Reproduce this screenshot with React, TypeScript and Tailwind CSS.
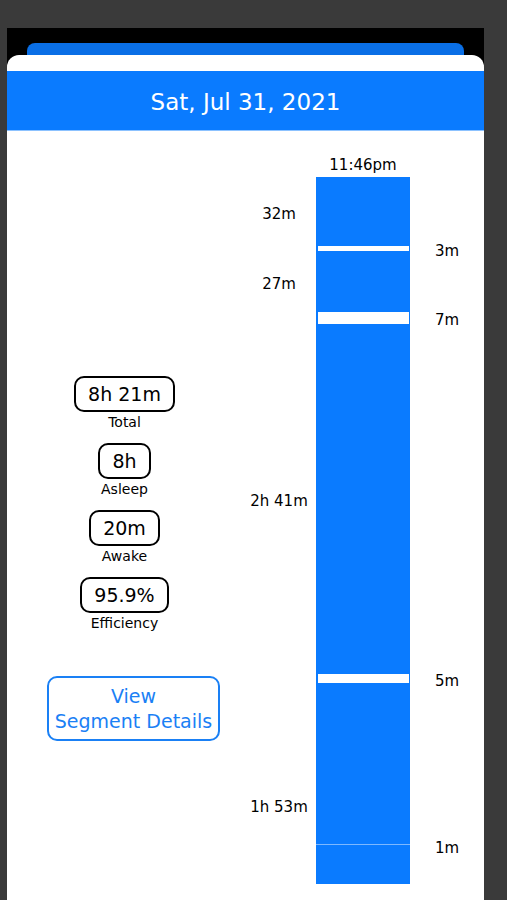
import React from "react";

type Row = {
  h: number;
  kind: "seg" | "gap" | "line";
  left?: string;
  right?: string;
  leftEnd?: boolean;
};

const rows: Row[] = [
  { h: 69, kind: "seg", left: "32m" },
  { h: 5, kind: "gap", right: "3m" },
  { h: 61, kind: "seg", left: "27m" },
  { h: 12, kind: "gap", right: "7m" },
  { h: 350, kind: "seg", left: "2h 41m" },
  { h: 9, kind: "gap", right: "5m" },
  { h: 161, kind: "seg", left: "1h 53m", leftEnd: true },
  { h: 1, kind: "line", right: "1m" },
  { h: 39, kind: "seg" },
];

const stats = [
  { value: "8h 21m", label: "Total" },
  { value: "8h", label: "Asleep" },
  { value: "20m", label: "Awake" },
  { value: "95.9%", label: "Efficiency" },
];

const App = () => {
  return (
    <div
      className="h-[900px] overflow-hidden bg-[#3a3a3a] pt-[28px] pl-[7px] pr-[23px]"
      style={{ fontFamily: '"DejaVu Sans", sans-serif' }}
    >
      <div className="h-full bg-black pt-[15px]">
        {/* tab peeking behind the card */}
        <div className="mx-[20px] h-[12px] rounded-t-[8px] bg-[#0a6fe6]"></div>

        <div className="h-full rounded-t-[12px] bg-white pt-[16px]">
          {/* Date header */}
          <div className="flex h-[60px] items-center justify-center border-b border-[#8cc2ff] bg-[#0a7bff] pt-[4px] text-[23px] text-white">
            Sat, Jul 31, 2021
          </div>

          <div className="flex">
            {/* Summary stats */}
            <div className="flex w-[235px] flex-col items-center pt-[245px]">
              <div className="flex flex-col items-center gap-[12px]">
                {stats.map((s) => (
                  <div key={s.label} className="flex flex-col items-center">
                    <div className="flex h-[36px] items-center rounded-[10px] border-2 border-black px-[12px] text-[19px] text-black">
                      {s.value}
                    </div>
                    <div className="mt-[1px] text-[14px] leading-[18px] text-black">{s.label}</div>
                  </div>
                ))}
              </div>
              <button className="mt-[44px] ml-[40px] flex h-[65px] w-[173px] flex-col items-center justify-center self-start rounded-[10px] border-2 border-[#1a80f5] text-[19px] leading-[25px] text-[#1a80f5]">
                <span>View</span>
                <span>Segment Details</span>
              </button>
            </div>

            {/* Timeline bar */}
            <div className="flex flex-col">
              <div className="ml-[74px] mt-[24px] mb-[2px] w-[94px] text-center text-[15px] leading-[20px] text-black">
                11:46pm
              </div>
              {rows.map((r, i) => (
                <div key={i} className="flex" style={{ height: r.h }}>
                  <div
                    className={`flex w-[74px] justify-center text-[15px] leading-[18px] text-black ${
                      r.leftEnd ? "items-end pb-[28px]" : "items-center pt-[4px]"
                    }`}
                  >
                    {r.left && <span className="whitespace-nowrap">{r.left}</span>}
                  </div>
                  <div className="w-[94px] bg-[#0a7bff] px-[1.5px]">
                    {r.kind === "gap" && <div className="h-full bg-white"></div>}
                    {r.kind === "line" && <div className="-mx-[1.5px] h-full bg-[#7db8ff]"></div>}
                  </div>
                  <div className="flex w-[74px] items-center justify-center pt-[4px] text-[15px] leading-[18px] text-black">
                    {r.right && <span className="whitespace-nowrap">{r.right}</span>}
                  </div>
                </div>
              ))}
            </div>
          </div>
        </div>
      </div>
    </div>
  );
};

export default App;
